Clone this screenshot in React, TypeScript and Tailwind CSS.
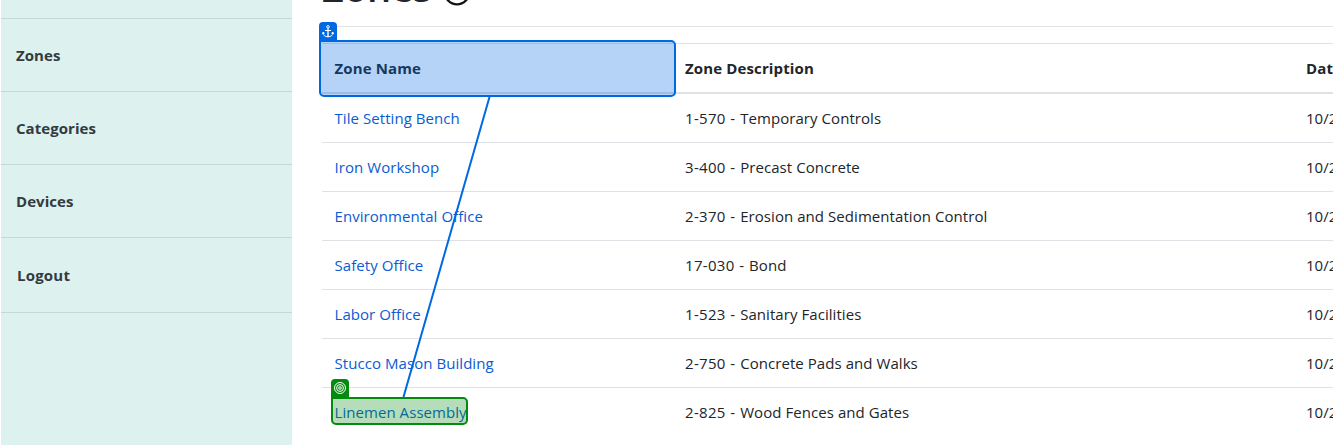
import React from "react";

const rows = [
  { name: "Tile Setting Bench", code: "1-570", description: "Temporary Controls" },
  { name: "Iron Workshop", code: "3-400", description: "Precast Concrete" },
  { name: "Environmental Office", code: "2-370", description: "Erosion and Sedimentation Control" },
  { name: "Safety Office", code: "17-030", description: "Bond" },
  { name: "Labor Office", code: "1-523", description: "Sanitary Facilities" },
  { name: "Stucco Mason Building", code: "2-750", description: "Concrete Pads and Walks" },
  { name: "Linemen Assembly", code: "2-825", description: "Wood Fences and Gates" },
];

const navItem = "flex h-[73px] shrink-0 items-center border-b border-[#c3d8d7] pl-[15px]";

function Sidebar() {
  return (
    <nav className="ml-px flex w-[291px] shrink-0 flex-col bg-[#ddf1ef] text-[15px] font-bold tracking-[0.05px] text-[#343a40]">
      <div className="h-[19px] shrink-0 border-b border-[#c3d8d7]" />
      <a className={navItem}>Zones</a>
      <a className={navItem}>Categories</a>
      <a className={navItem}>Devices</a>
      <a className="flex h-[75px] shrink-0 items-center border-b border-[#c3d8d7] pl-4 tracking-[0.2px]">Logout</a>
    </nav>
  );
}

function ZonesTable() {
  return (
    <div className="mt-4 w-[1100px] text-[15px] text-[#212529]">
      <div className="flex h-[51px] items-center border-t border-b-2 border-[#dee2e6] font-bold tracking-[0.13px]">
        <div className="w-[351px] pl-[12.5px]">Zone Name</div>
        <div className="w-[621px] pl-3">Zone Description</div>
        <div className="pl-3">Date</div>
      </div>
      {rows.map((row) => (
        <div key={row.name} className="flex h-[49px] items-center border-b border-[#dee2e6] last:border-b-0">
          <div className="w-[351px] pl-[12.5px] tracking-[0.06px] text-[#0a5bd3]">{row.name}</div>
          <div className="w-[621px] pl-3 tracking-[0.06px]">
            <span className="tracking-[0.3px] [word-spacing:0.5px]">{row.code} - </span>
            {row.description}
          </div>
          <div className="pl-3">10/2</div>
        </div>
      ))}
    </div>
  );
}

function Annotations() {
  return (
    <>
      <div className="absolute left-[319px] top-[40px] h-[57px] w-[357px] rounded-[5px] rounded-tl-none border-2 border-[#0068e0] bg-[#0068e0]/29" />
      <div className="absolute left-[319px] top-[22px] flex h-[19px] w-[18px] justify-center rounded-t-[4px] bg-[#0068e0] pt-[3px]">
        <svg width="12" height="13" viewBox="0 0 12 13" fill="none" stroke="white" strokeWidth="1">
          <circle cx="6" cy="1.9" r="1.3" />
          <path d="M6 3.3V12" strokeWidth="1.4" />
          <path d="M3 5.5h6M1 7.5c0 3 2.3 4.3 5 4.3s5-1.3 5-4.3M.5 9 1 7.3l1.7 1M11.5 9 11 7.3l-1.7 1" />
        </svg>
      </div>
      <svg className="absolute left-0 top-0" width="1333" height="445" fill="none">
        <path d="M489.5 97 403.5 397" stroke="#0068e0" strokeWidth="2" />
      </svg>
      <div className="absolute left-[331px] top-[397px] h-[28px] w-[137px] rounded-[5px] rounded-tl-none border-2 border-[#048a0e] bg-[#048a0e]/29" />
      <div className="absolute left-[331px] top-[379px] flex h-[19px] w-[18px] justify-center rounded-t-[4px] bg-[#048a0e] pt-[3px]">
        <svg width="12" height="12" viewBox="0 0 12 12" fill="none" stroke="white" strokeWidth="1">
          <circle cx="6" cy="6" r="5.5" />
          <circle cx="6" cy="6" r="3.4" />
          <circle cx="6" cy="6" r="1.3" />
        </svg>
      </div>
    </>
  );
}

export default function App() {
  return (
    <div className="relative flex h-[445px] w-[1333px] overflow-hidden bg-white font-['Open_Sans','Noto_Sans',sans-serif]">
      <Sidebar />
      <main className="ml-[30px] min-w-0 flex-1">
        <div className="-mt-[37px] flex h-[63px] items-start">
          <h1 className="text-[38px] font-semibold leading-[48px] text-[#212529]">Zones</h1>
          <svg className="ml-[11px] mt-[15px]" width="28" height="28" viewBox="0 0 28 28" fill="none" stroke="#111315" strokeWidth="2.3">
            <circle cx="14" cy="14" r="12.3" />
          </svg>
        </div>
        <div className="h-px bg-[#e1e3e5]" />
        <ZonesTable />
      </main>
      <Annotations />
    </div>
  );
}
